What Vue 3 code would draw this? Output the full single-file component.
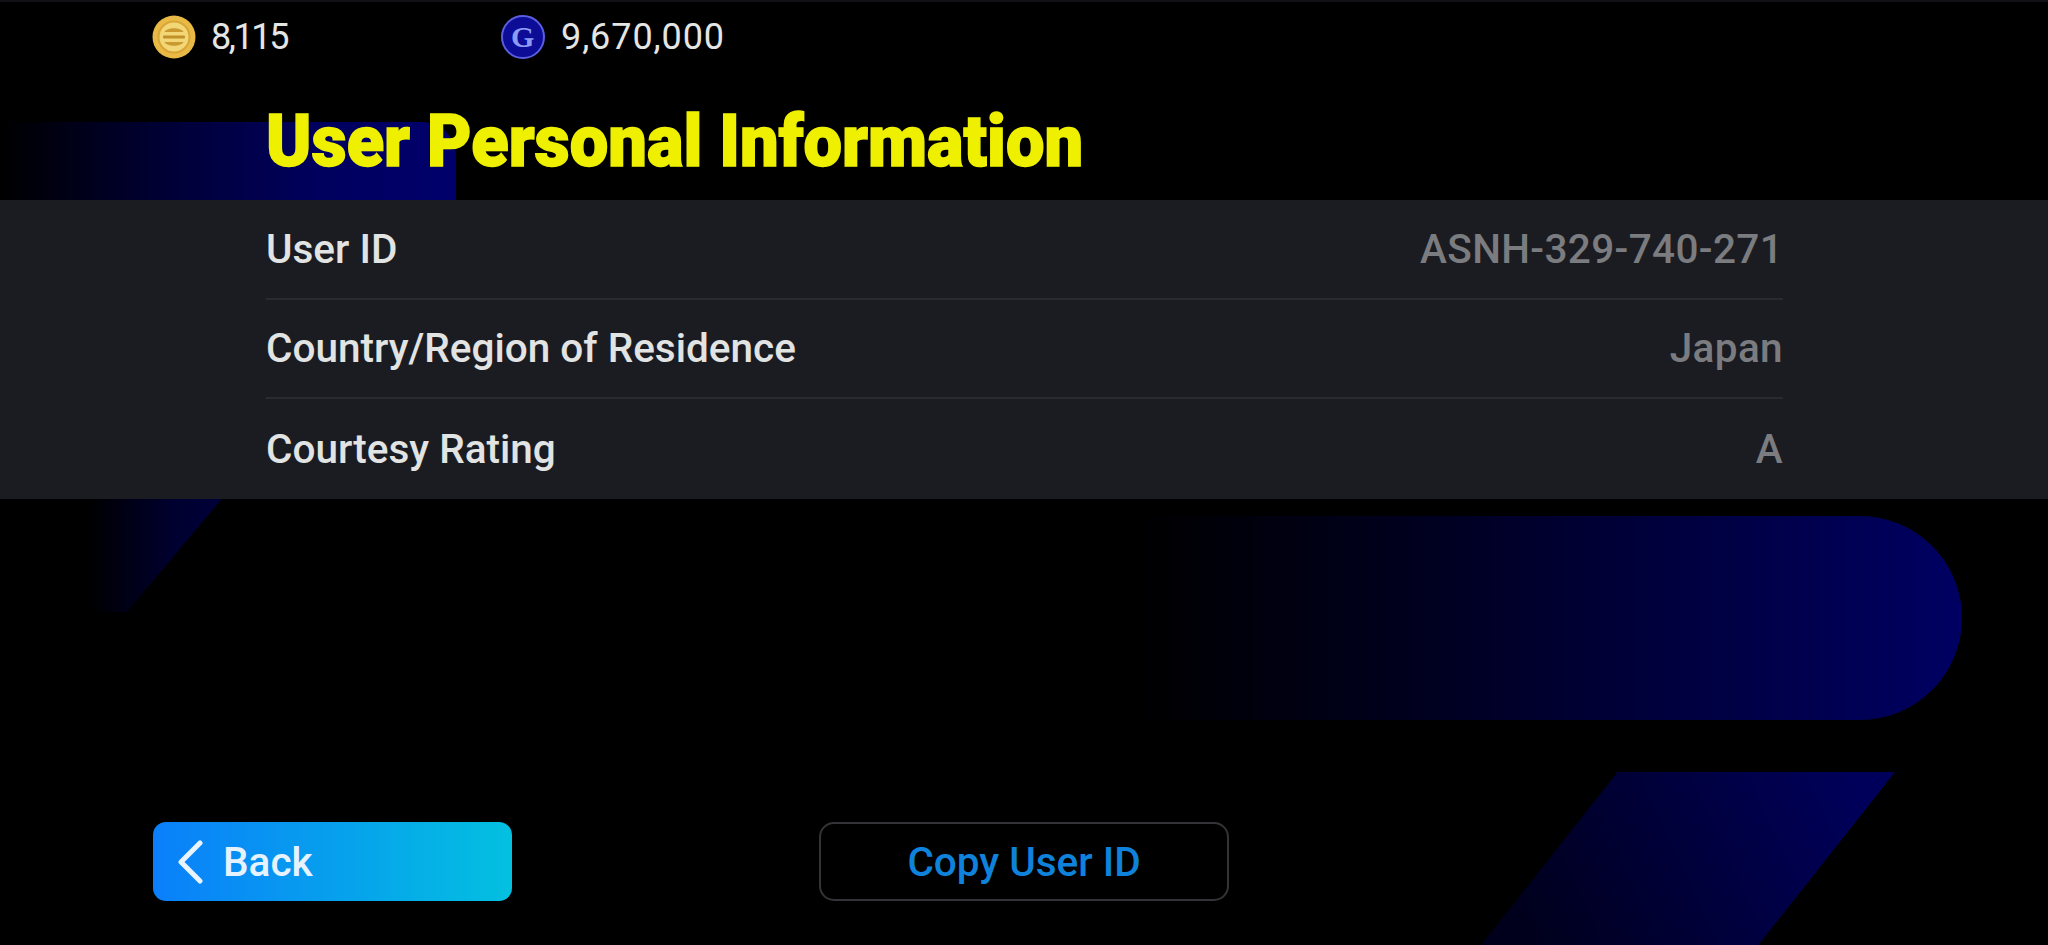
<script setup>
const rows = [
  { label: 'User ID', value: 'ASNH-329-740-271' },
  { label: 'Country/Region of Residence', value: 'Japan' },
  { label: 'Courtesy Rating', value: 'A' },
];
</script>

<template>
  <div class="page">
    <div class="deco deco--top"></div>
    <div class="deco deco--slant"></div>
    <div class="deco deco--pill"></div>
    <div class="deco deco--bar"></div>

    <header class="wallet">
      <div class="wallet__item wallet__item--coin">
        <svg class="coin" viewBox="0 0 44 44" aria-hidden="true">
          <circle cx="22" cy="22" r="21.5" fill="#e8b945" />
          <circle cx="22" cy="22" r="15.5" fill="#f3d676" stroke="#d8a636" stroke-width="2" />
          <path d="M12.5 17c2.5-5 16.500-5 19 0z" fill="#c99a30" />
          <rect x="11" y="20.500" width="22" height="3" rx="1" fill="#c0902a" />
          <path d="M12.5 27c2.500 5 16.500 5 19 0z" fill="#c99a30" />
        </svg>
        <span>8,115</span>
      </div>
      <div class="wallet__item wallet__item--gp">
        <svg class="coin" viewBox="0 0 44 44" aria-hidden="true">
          <circle cx="22" cy="22" r="21" fill="#0c0c96" stroke="#5a5ee0" stroke-width="2" />
          <text x="22" y="32" text-anchor="middle" class="coin__letter">G</text>
        </svg>
        <span>9,670,000</span>
      </div>
    </header>

    <h1 class="title">User Personal Information</h1>

    <section class="panel">
      <div v-for="row in rows" :key="row.label" class="panel__row">
        <span class="panel__label">{{ row.label }}</span>
        <span class="panel__value">{{ row.value }}</span>
      </div>
    </section>

    <footer class="actions">
      <button type="button" class="btn btn--back">
        <svg class="btn__chevron" viewBox="0 0 26 44" aria-hidden="true">
          <path d="M23 3 4 22l19 19" fill="none" stroke="#eaf4ff" stroke-width="5" stroke-linecap="round" stroke-linejoin="round" />
        </svg>
        Back
      </button>
      <button type="button" class="btn btn--copy">Copy User ID</button>
    </footer>
  </div>
</template>

<style scoped>
.page {
  position: relative;
  width: 2048px;
  height: 945px;
  overflow: hidden;
  display: flex;
  flex-direction: column;
  background: #000;
  font-family: Roboto, "Noto Sans", sans-serif;
  border-top: 2px solid #101216;
  box-sizing: border-box;
}

.deco {
  position: absolute;
}

.deco--top {
  left: 0;
  top: 120px;
  width: 456px;
  height: 120px;
  border-radius: 0 34px 34px 0;
  background: linear-gradient(90deg, #000 0%, #000034 35%, #00005e 70%, #00006c 100%);
}

.deco--slant {
  left: 80px;
  top: 480px;
  width: 156px;
  height: 130px;
  clip-path: polygon(0 0, 100% 0, 30% 100%, 0 100%);
  background: linear-gradient(90deg, #000 5%, #000030 60%, #00003c 100%);
}

.deco--pill {
  left: 1130px;
  top: 514px;
  width: 832px;
  height: 204px;
  border-radius: 0 102px 102px 0;
  background: linear-gradient(90deg, #000 0%, #000024 40%, #000062 100%);
}

.deco--bar {
  left: 1481px;
  top: 770px;
  width: 414px;
  height: 173px;
  clip-path: polygon(33% 0, 100% 0, 67% 100%, 0 100%);
  background: linear-gradient(65deg, #00001c 10%, #00005a 90%);
}

.wallet {
  position: relative;
  display: flex;
  align-items: center;
  height: 70px;
  padding-left: 152px;
}

.wallet__item {
  display: flex;
  align-items: center;
  gap: 15px;
  color: #e4e5e5;
  font-size: 36px;
}

.wallet__item--coin {
  width: 349px;
  letter-spacing: -2.4px;
}

.wallet__item--gp {
  gap: 16px;
  letter-spacing: 0.9px;
}

.coin {
  width: 44px;
  height: 44px;
  flex: none;
}

.coin__letter {
  font: 900 30px "Liberation Serif", serif;
  fill: #8d9bf5;
}

.title {
  position: relative;
  margin: 32px 0 0 266px;
  height: 96px;
  color: #eef000;
  font-size: 72px;
  line-height: 76px;
  font-weight: 900;
  -webkit-text-stroke: 1.5px #eef000;
  white-space: nowrap;
  transform: scaleX(0.952);
  transform-origin: left center;
}

.panel {
  position: relative;
  height: 299px;
  padding: 0 265px 0 266px;
  background: #1b1c21;
  box-sizing: border-box;
}

.panel__row {
  display: flex;
  justify-content: space-between;
  align-items: center;
  height: 99.5px;
  box-sizing: border-box;
  border-bottom: 2px solid #2a2b30;
  font-size: 40.5px;
  font-weight: 500;
}

.panel__row:last-child {
  border-bottom: 0;
}

.panel__label {
  color: #e2e3e3;
}

.panel__value {
  color: #7b7c80;
  letter-spacing: 0.35px;
}

.actions {
  position: relative;
  display: flex;
  gap: 307px;
  margin-top: 323px;
  padding-left: 153px;
}

.btn {
  height: 79px;
  box-sizing: border-box;
  font-family: inherit;
  font-size: 40.5px;
  font-weight: 500;
}

.btn--back {
  display: flex;
  align-items: center;
  gap: 20px;
  width: 359px;
  padding: 0 0 0 24px;
  border: 0;
  border-radius: 13px;
  color: #e6f3ff;
  background: linear-gradient(90deg, #0a7ffa 0%, #03c0e0 100%);
}

.btn__chevron {
  width: 26px;
  height: 44px;
}

.btn--copy {
  width: 410px;
  border: 2px solid #333437;
  border-radius: 15px;
  color: #0f82dc;
  background: #000;
}
</style>

<style>
html,
body {
  margin: 0;
  background: #000;
}
</style>
